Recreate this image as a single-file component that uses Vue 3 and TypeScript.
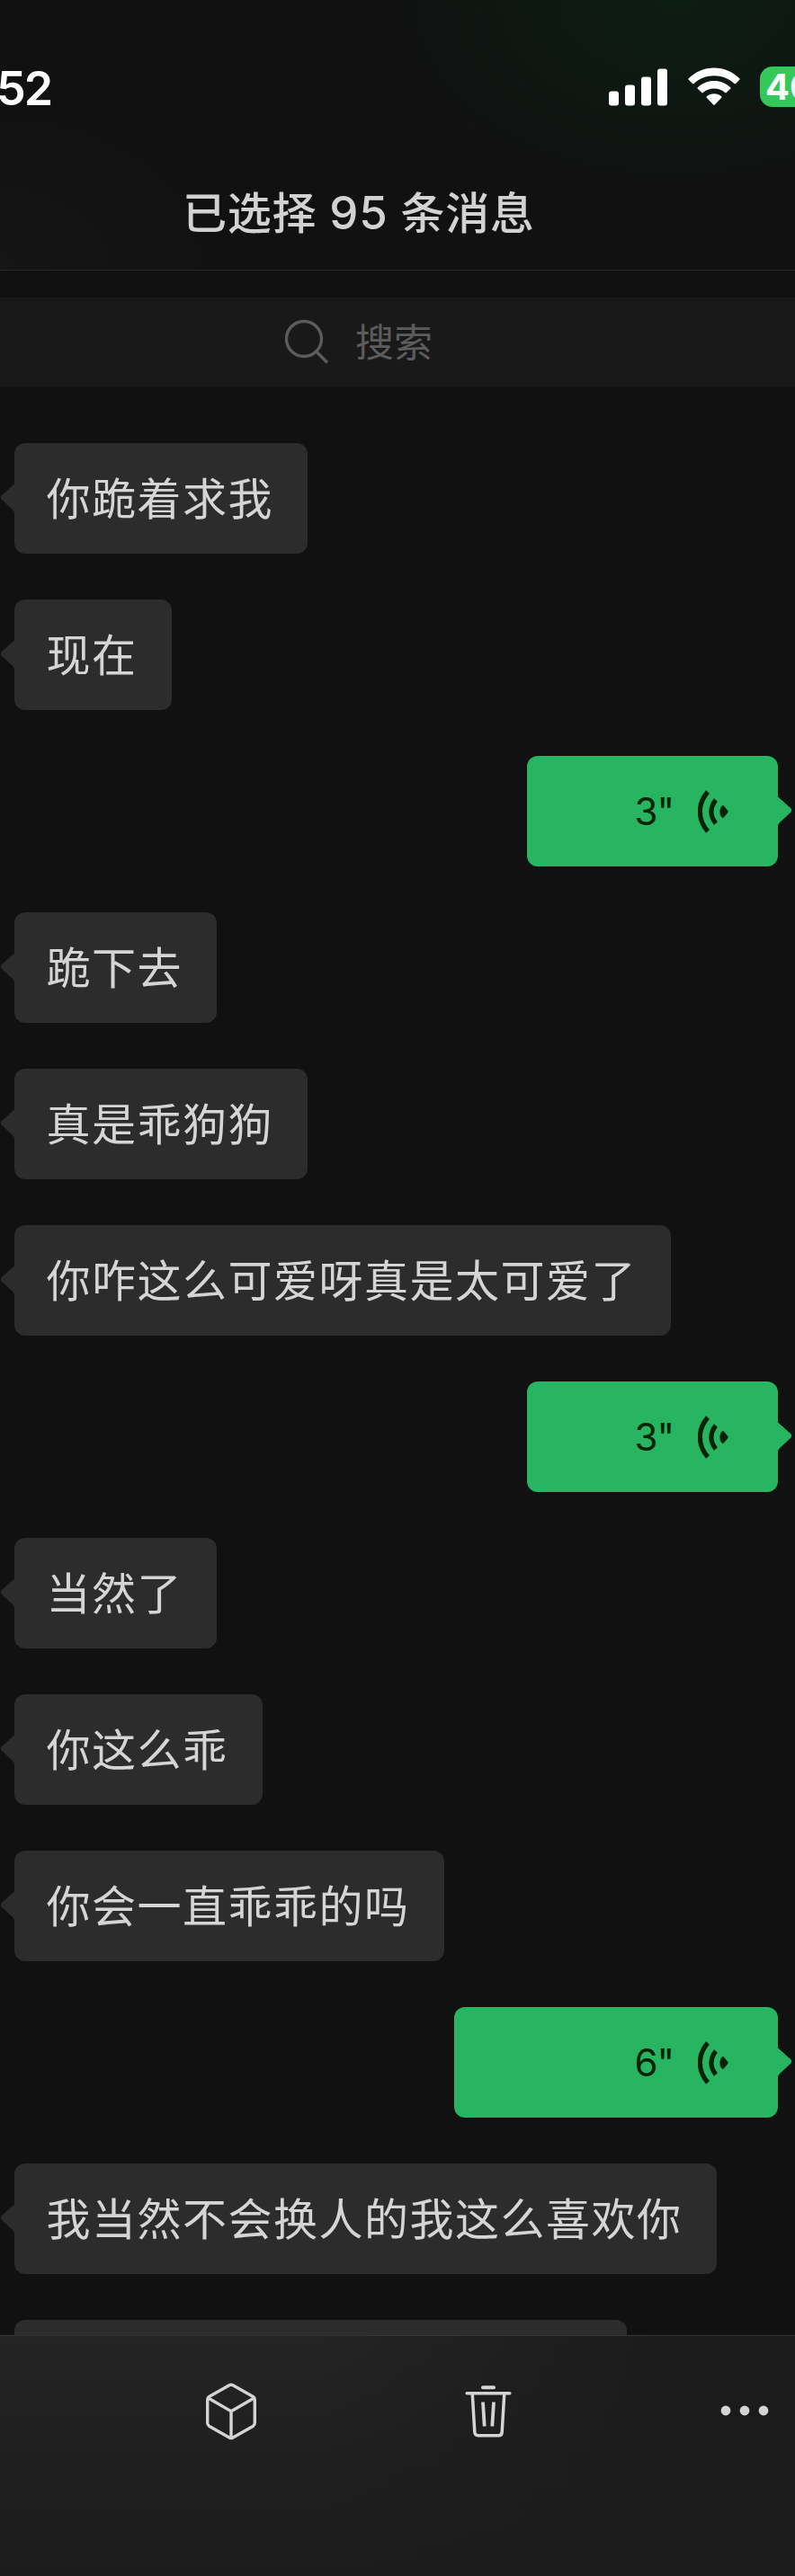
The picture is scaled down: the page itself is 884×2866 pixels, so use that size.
<script setup lang="ts">
interface Message {
  text?: string
  seconds?: number
  width?: number
}

const messages: Message[] = [
  { text: '你跪着求我' },
  { text: '现在' },
  { seconds: 3, width: 279 },
  { text: '跪下去' },
  { text: '真是乖狗狗' },
  { text: '你咋这么可爱呀真是太可爱了' },
  { seconds: 3, width: 279 },
  { text: '当然了' },
  { text: '你这么乖' },
  { text: '你会一直乖乖的吗' },
  { seconds: 6, width: 360 },
  { text: '我当然不会换人的我这么喜欢你' },
  { text: '', width: 681 },
]
</script>

<template>
  <div class="screen">
    <header class="top">
      <div class="status">
        <span class="time">52</span>
        <svg class="signal" width="66" height="42" viewBox="0 0 66 42" fill="#fff">
          <rect x="0" y="25.5" width="11" height="16" rx="3" />
          <rect x="18" y="18.5" width="11" height="23" rx="3" />
          <rect x="36" y="9.5" width="11" height="32" rx="3" />
          <rect x="54" y="0.5" width="11" height="41" rx="3" />
        </svg>
        <svg class="wifi" width="58" height="43" viewBox="0 0 58 43" fill="#fff">
          <path d="M29 0.5C40 0.5 50 5 57.300 12.300Q58 13 57.300 13.700L53 18Q52.200 18.700 51.400 18C45.500 12.300 37.500 9.300 29 9.300S12.500 12.300 6.600 18Q5.800 18.700 5 18L0.700 13.700Q0 13 0.700 12.300C8 5 18 0.500 29 0.500Z" />
          <path d="M29 15C36 15 42.500 17.700 47.200 22.300Q48 23 47.200 23.700L42.700 28.100Q42 28.700 41.200 28.100C38 25.200 33.700 23.600 29 23.600S20 25.200 16.800 28.100Q16 28.700 15.300 28.100L10.800 23.700Q10 23 10.800 22.300C15.500 17.700 22 15 29 15Z" />
          <path d="M29 29.200C32.200 29.200 35 30.300 37.200 32.200Q37.900 33 37.200 33.700L29.800 41.500Q29 42.200 28.200 41.500L20.800 33.700Q20.100 33 20.800 32.200C23 30.300 25.800 29.200 29 29.200Z" />
        </svg>
        <span class="battery">40</span>
      </div>
      <h1 class="title">已选择 <span class="num">95</span> 条消息</h1>
    </header>

    <div class="search">
      <svg width="50" height="50" viewBox="0 0 50 50" fill="none" stroke="#5c5c5c" stroke-width="3.4">
        <circle cx="22" cy="22" r="19.500" />
        <path d="M35.500 36L48 48.500" />
      </svg>
      <span>搜索</span>
    </div>

    <main class="chat">
      <div v-for="(m, i) in messages" :key="i" class="row" :class="{ mine: m.seconds }">
        <div class="bubble" :style="m.width ? { width: m.width + 'px' } : undefined">
          <svg class="tail" width="17" height="34" viewBox="0 0 17 34">
            <path d="M17 0C16 1.500 15.500 2 14 3.300L2 14Q-0.500 16.500 2 19L14 30Q16 32 16 34H17Z" />
          </svg>
          <template v-if="m.seconds">
            <span class="secs">{{ m.seconds }}"</span>
            <svg class="wave" width="34" height="48" viewBox="0 0 34 48">
              <path d="M11 2C-0.500 15 -0.500 33 11 46M20 11C13.200 19 13.200 29 20 37" fill="none" stroke="#042204" stroke-width="5.200" />
              <path d="M27 17.200Q28.200 16.800 29 17.700L33.300 23Q34 24 33.300 25L29 30.300Q28.200 31.200 27 30.800Q24.300 28 24.300 24T27 17.200Z" fill="#042204" />
            </svg>
          </template>
          <span v-else class="text">{{ m.text }}</span>
        </div>
      </div>
    </main>

    <footer class="toolbar">
      <svg class="cube" width="56" height="64" viewBox="0 0 56 64" fill="none" stroke="#d4d4d4" stroke-width="3.400" stroke-linejoin="round">
        <path d="M26 2.800Q28 1.700 30 2.800L52.500 15.500Q54.300 16.700 54.300 19V44.500Q54.300 47 52.500 48.200L30 61Q28 62.200 26 61L3.500 48.200Q1.700 47 1.700 44.500V19Q1.700 16.700 3.500 15.500Z" />
        <path d="M2.500 17L28 31.700L53.500 17M28 31.700V61" />
      </svg>
      <svg class="trash" width="52" height="58" viewBox="0 0 52 58" fill="none" stroke="#d4d4d4" stroke-width="3.500">
        <path d="M20 2.300H32" stroke-width="4" stroke-linecap="round" />
        <path d="M2.200 8.800H49.800" stroke-linecap="round" />
        <path d="M8.300 10L10.800 52Q11.100 55.800 14.800 55.800H37.200Q40.900 55.800 41.200 52L43.700 10" />
        <path d="M20 18.500L21.700 45.500M32 18.500L30.300 45.500" stroke-width="3.800" />
      </svg>
      <svg class="more" width="54" height="12" viewBox="0 0 54 12" fill="#d4d4d4">
        <circle cx="6" cy="6" r="5.400" />
        <circle cx="27" cy="6" r="5.400" />
        <circle cx="48" cy="6" r="5.400" />
      </svg>
    </footer>
  </div>
</template>

<style>
body {
  background: #111;
}
</style>

<style scoped>
.screen {
  display: flex;
  flex-direction: column;
  width: 884px;
  height: 2866px;
  overflow: hidden;
  background: #111;
  font-family: Inter, 'Noto Sans CJK SC', sans-serif;
}
.top {
  box-sizing: border-box;
  flex: none;
  height: 301px;
  border-bottom: 1px solid #2b2b2b;
  background:
    radial-gradient(ellipse 330px 220px at 750px 0, #0c1d12 0%, #0e1812 45%, rgba(17, 17, 17, 0) 100%),
    radial-gradient(ellipse 270px 200px at 0 300px, #151515, #111);
}
.status {
  display: flex;
  height: 119px;
  padding-top: 74px;
  box-sizing: border-box;
}
.time {
  flex: none;
  width: 681px;
  margin-left: -4px;
  color: #fff;
  font-size: 52px;
  font-weight: 600;
  line-height: 50px;
  letter-spacing: -2px;
}
.signal {
  flex: none;
  margin: 1.500px 0 0;
}
.wifi {
  flex: none;
  margin: 1px 0 0 22px;
}
.battery {
  flex: none;
  box-sizing: border-box;
  width: 80px;
  height: 45px;
  margin-left: 22px;
  padding-left: 6px;
  border-radius: 14px;
  background: #34c759;
  color: #fff;
  font-size: 40px;
  font-weight: 700;
  line-height: 45px;
}
.title {
  margin: 82px 0 0 203px;
  color: #d2d2d2;
  font-size: 49px;
  font-weight: 500;
  line-height: 72px;
  letter-spacing: 0.800px;
  white-space: pre;
}
.num {
  font-size: 51px;
}
.search {
  display: flex;
  flex: none;
  justify-content: flex-start;
  align-items: center;
  height: 99px;
  margin-top: 30px;
  padding-left: 316px;
  box-sizing: border-box;
  background: #191919;
  color: #5c5c5c;
  font-size: 43px;
}
.search svg {
  margin-bottom: 2px;
}
.search span {
  margin-left: 29px;
  padding-bottom: 6px;
}
.chat {
  display: flex;
  flex: none;
  flex-direction: column;
  gap: 51px;
  height: 2168px;
  padding: 63px 19px 0 16px;
  box-sizing: border-box;
  overflow: hidden;
}
.row {
  display: flex;
  flex: none;
}
.row.mine {
  justify-content: flex-end;
}
.bubble {
  position: relative;
  display: flex;
  align-items: center;
  box-sizing: border-box;
  height: 123px;
  padding: 0 38px 0 35.500px;
  border-radius: 12px;
  background: #2c2c2c;
  color: #d5d5d5;
}
.text {
  padding-bottom: 7px;
  font-size: 49px;
  letter-spacing: 1.500px;
  white-space: nowrap;
}
.tail {
  position: absolute;
  top: 43.500px;
  left: -16px;
  fill: #2c2c2c;
}
.mine .bubble {
  justify-content: flex-end;
  padding: 0 55px 0 0;
  background: #28b561;
  color: #042204;
}
.mine .tail {
  right: -16px;
  left: auto;
  fill: #28b561;
  transform: scaleX(-1);
}
.secs {
  margin-right: 27px;
  font-size: 42px;
  letter-spacing: -1px;
}
.toolbar {
  position: relative;
  display: flex;
  flex: 1;
  align-items: flex-start;
  box-sizing: border-box;
  border-top: 1px solid #363636;
  background:
    linear-gradient(90deg, rgba(27, 27, 27, 0) 40%, #1b1b1b 85%),
    linear-gradient(#242424, #1f1f1f 50%, #1c1c1c);
}
.cube {
  margin: 52px 0 0 229px;
}
.trash {
  margin: 55px 0 0 232px;
}
.more {
  margin: 77px 0 0 232px;
}
</style>
